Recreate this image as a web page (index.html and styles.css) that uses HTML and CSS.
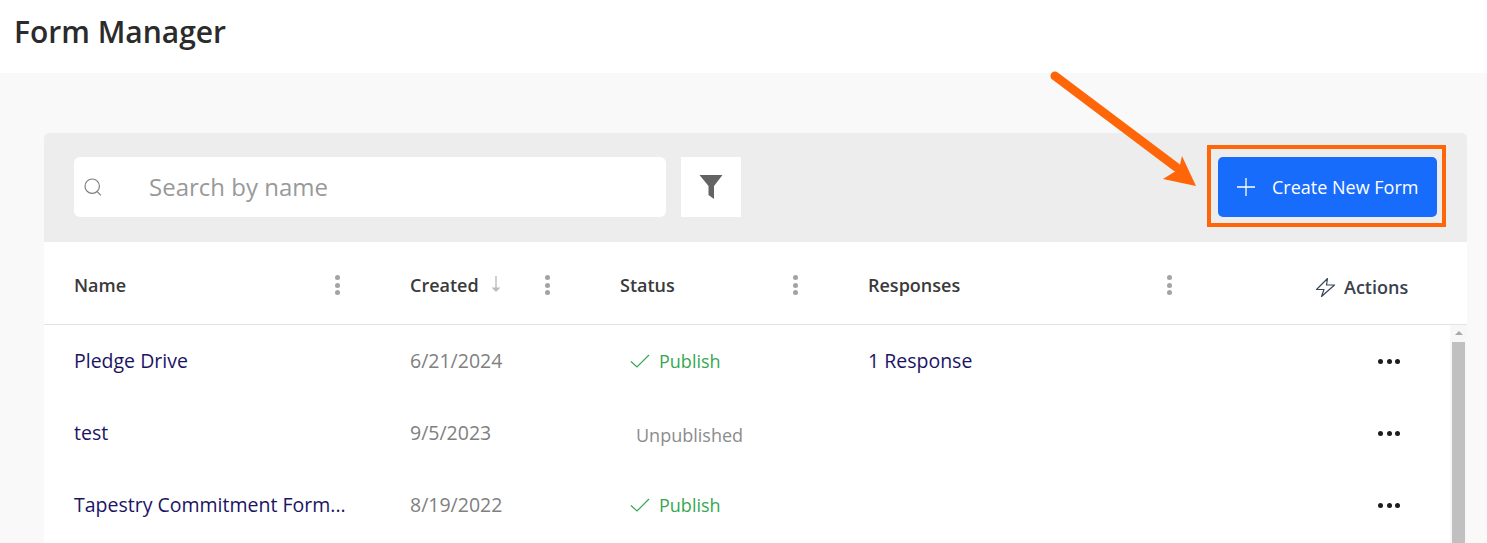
FILE: index.html
```html
<!DOCTYPE html>
<html lang="en">
<head>
<meta charset="utf-8">
<title>Form Manager</title>
<link rel="stylesheet" href="styles.css">
</head>
<body>
<header class="page-header"><h1>Form Manager</h1></header>
<main class="content">
  <section class="card">
    <div class="toolbar">
      <div class="search">
        <svg class="search-icon" width="20" height="20" viewBox="0 0 20 20" fill="none" stroke="#7d7d7d" stroke-width="1.2"><circle cx="9.2" cy="9.2" r="7.2"/><path d="M14.2 14.6l3.6 3.8"/></svg>
        <span class="placeholder">Search by name</span>
      </div>
      <button class="filter" aria-label="Filter">
        <svg width="24" height="24" viewBox="0 0 24 24"><path d="M.5 0H23.5L15 11V24L9.5 20V11Z" fill="#636363"/></svg>
      </button>
      <button class="create">
        <svg width="20" height="20" viewBox="0 0 20 20" stroke="#fff" stroke-width="1.3"><path d="M10 1V19M1 10H19"/></svg>
        <span>Create New Form</span>
      </button>
    </div>
    <div class="row head">
      <div class="cell c-name"><span>Name</span><i class="kebab"><b></b><b></b><b></b></i></div>
      <div class="cell c-created"><span>Created<svg class="sort" width="12" height="18" viewBox="0 0 12 18" fill="#bdbdbd"><path d="M5.3 0h1.4v12H5.3z"/><path d="M1.5 11.5h9L6 16z"/></svg></span><i class="kebab"><b></b><b></b><b></b></i></div>
      <div class="cell c-status"><span>Status</span><i class="kebab"><b></b><b></b><b></b></i></div>
      <div class="cell c-resp"><span>Responses</span><i class="kebab"><b></b><b></b><b></b></i></div>
      <div class="cell c-actions head-actions">
        <svg width="21" height="21" viewBox="0 0 21 21" fill="none" stroke="#39475a" stroke-width="1.2" stroke-linejoin="round"><path d="M12.5 1.5L1.5 12.5H9L6.5 19.5L19.5 8H11.5Z"/></svg>
        <span>Actions</span>
      </div>
    </div>
    <div class="body">
      <div class="rows">
        <div class="row item">
          <div class="c-name link">Pledge Drive</div>
          <div class="c-created date">6/21/2024</div>
          <div class="c-status pub"><svg width="20" height="14" viewBox="0 0 20 14" fill="none" stroke="#36a852" stroke-width="1.2"><path d="M1 7.5L7 13L19 1"/></svg><span>Publish</span></div>
          <div class="c-resp link">1 Response</div>
          <div class="c-actions dots"><b></b><b></b><b></b></div>
        </div>
        <div class="row item">
          <div class="c-name link">test</div>
          <div class="c-created date">9/5/2023</div>
          <div class="c-status unpub">Unpublished</div>
          <div class="c-resp"></div>
          <div class="c-actions dots"><b></b><b></b><b></b></div>
        </div>
        <div class="row item">
          <div class="c-name link">Tapestry Commitment Form...</div>
          <div class="c-created date">8/19/2022</div>
          <div class="c-status pub"><svg width="20" height="14" viewBox="0 0 20 14" fill="none" stroke="#36a852" stroke-width="1.2"><path d="M1 7.5L7 13L19 1"/></svg><span>Publish</span></div>
          <div class="c-resp"></div>
          <div class="c-actions dots"><b></b><b></b><b></b></div>
        </div>
      </div>
      <div class="scrollbar">
        <div class="sb-up"></div>
        <div class="sb-thumb"></div>
      </div>
    </div>
  </section>
</main>
<div class="callout-box"></div>
<svg class="callout-arrow" width="170" height="130" viewBox="0 0 170 130">
  <path d="M7 6L128 97" stroke="#ff6609" stroke-width="9" stroke-linecap="round" fill="none"/>
  <path d="M148 116L115 109L131 99L134 86Z" fill="#ff6609"/>
</svg>
</body>
</html>
```
FILE: styles.css
```css
* { box-sizing: border-box; }
html, body { margin: 0; height: 543px; overflow: hidden; }
body { font-family: "Open Sans", sans-serif; background: #f9f9f9; color: #333; position: relative; }
.page-header { height: 73px; background: #fff; padding: 12px 15px 0; }
.page-header h1 { margin: 0 0 0 -1px; font-size: 30px; line-height: 40px; font-weight: 600; color: #2b2b2b; }
.content { padding: 60px 20px 0 44px; }
.card { background: #fff; border-radius: 5px 5px 0 0; overflow: hidden; height: 410px; }
.toolbar { height: 109px; background: #ededed; display: flex; padding: 24px 30px 25px; gap: 15px; }
.search { width: 592px; height: 60px; background: #fff; border-radius: 6px; display: flex; align-items: center; padding-left: 9px; }
.search-icon { margin-right: 46px; }
.placeholder { font-size: 24px; color: #999; padding-bottom: 1px; }
.filter { width: 60px; height: 60px; border: 0; background: #fff; padding: 0 1px 0 0; display: flex; align-items: center; justify-content: center; }
.create { margin-left: auto; width: 219px; height: 60px; border: 0; border-radius: 5px; background: #186cfc; color: #fff; font: 500 18px "Open Sans", sans-serif; display: flex; align-items: center; padding: 0 0 0 18px; gap: 16px; }
.row { display: flex; padding-left: 30px; }
.head { height: 83px; border-bottom: 1px solid #e3e3e3; align-items: center; font-size: 18px; font-weight: 600; color: #3a3a3a; padding-top: 4px; }
.cell { display: flex; align-items: center; justify-content: space-between; padding-right: 70.5px; height: 100%; }
.c-name { width: 336px; }
.c-created { width: 210px; }
.c-status { width: 248px; }
.c-resp { width: 374px; }
.c-actions { flex: 1; }
.sort { margin-left: 11px; vertical-align: -1px; }
.cell span { display: flex; align-items: center; }
.kebab { display: flex; flex-direction: column; gap: 2.5px; }
.kebab b { width: 5px; height: 5px; border-radius: 50%; background: #a3a3a3; }
.head-actions { padding: 4px 0 0 73px; justify-content: flex-start; gap: 8px; color: #39414d; }
.body { display: flex; height: 300px; }
.rows { flex: 1; min-width: 0; }
.item { height: 72px; align-items: center; font-size: 18px; }
.item .c-actions { flex: 1; }
.link { color: #1b1464; font-size: 19.5px; padding-bottom: 2px; }
.date { color: #808080; font-size: 19.5px; padding-bottom: 2px; }
.pub { color: #36a852; display: flex; align-items: center; padding-left: 10px; gap: 9px; }
.unpub { color: #8c8c8c; padding: 4px 0 0 16px; }
.dots { display: flex; justify-content: flex-start; gap: 3.5px; padding: 1px 0 0 136px; }
.dots b { width: 5px; height: 5px; border-radius: 50%; background: #1c1c1c; }
.scrollbar { width: 17px; background: #f7f7f7; padding: 0 2px; display: flex; flex-direction: column; }
.sb-up { height: 17px; position: relative; }
.sb-up::before { content: ""; position: absolute; left: 3px; top: 6px; border: 4px solid transparent; border-top: 0; border-bottom: 4px solid #a8a8a8; }
.sb-thumb { flex: 1; background: #c0c0c0; }
.callout-box { position: absolute; left: 1207px; top: 145px; width: 239px; height: 82px; border: 4px solid #ff6609; }
.callout-arrow { position: absolute; left: 1048px; top: 70px; }
```
